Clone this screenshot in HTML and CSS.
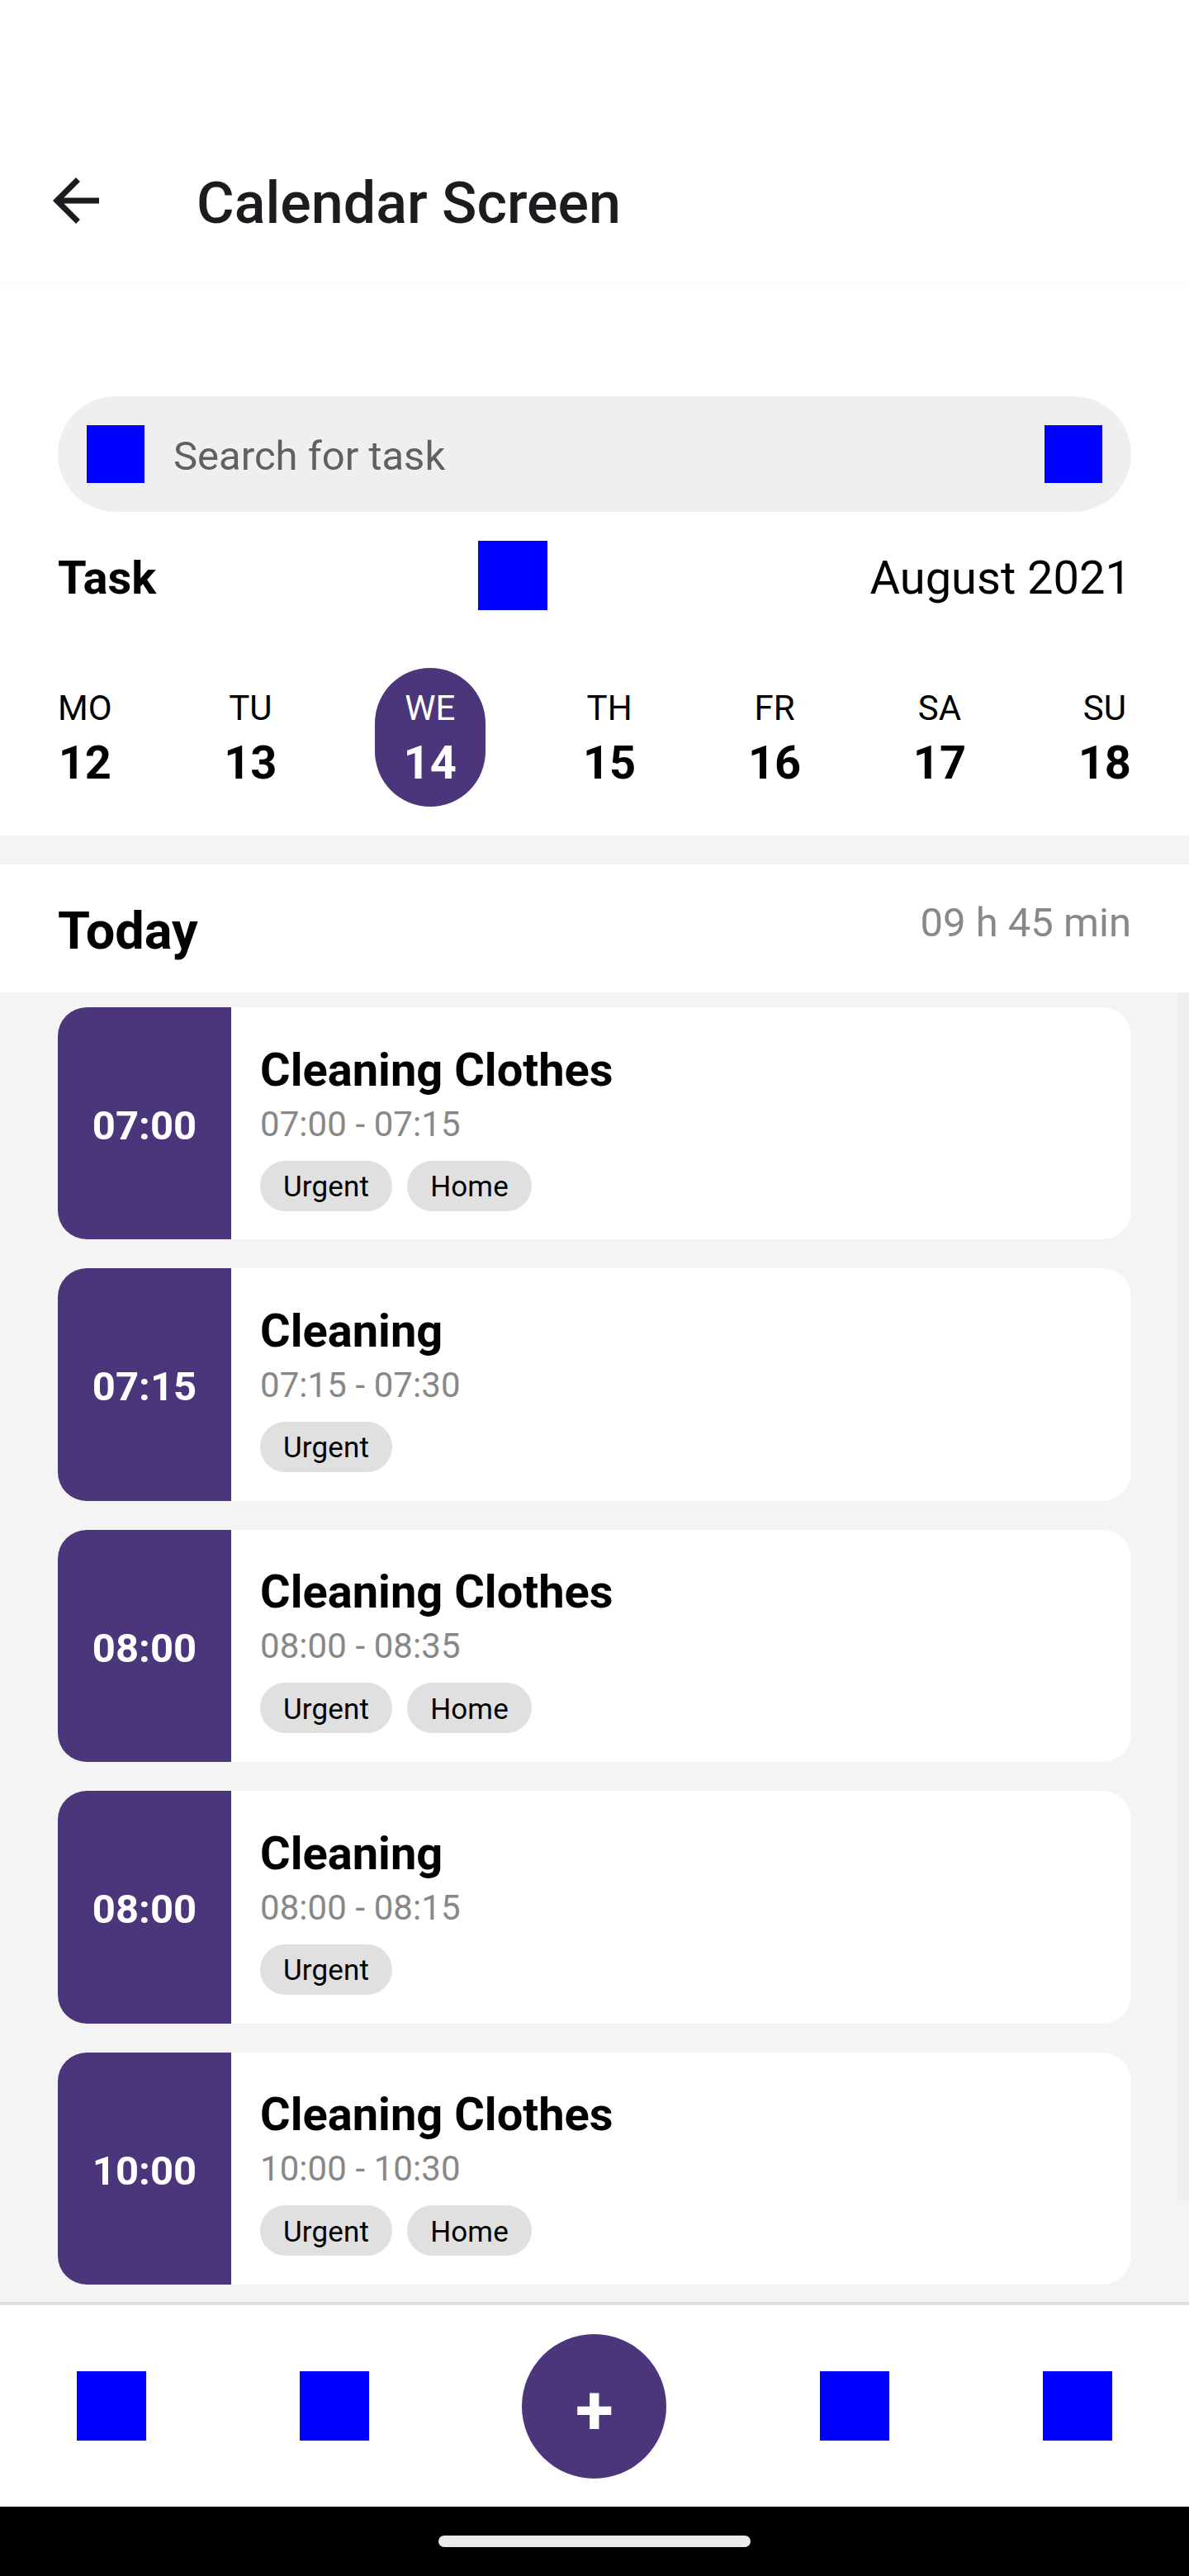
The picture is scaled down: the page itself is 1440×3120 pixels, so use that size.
FILE: index.html
```html
<!DOCTYPE html>
<html lang="en">
<head>
<meta charset="utf-8">
<title>Calendar Screen</title>
<link rel="stylesheet" href="styles.css">
</head>
<body>
<div class="screen">
  <header class="appbar">
    <svg class="back" viewBox="0 0 24 24" aria-label="Back"><path d="M20 11H7.83l5.59-5.59L12 4l-8 8 8 8 1.41-1.41L7.83 13H20v-2z"/></svg>
    <h1 class="title">Calendar Screen</h1>
  </header>

  <section class="top">
    <div class="search">
      <span class="icon small"></span>
      <span class="text placeholder">Search for task</span>
      <span class="icon small"></span>
    </div>
    <div class="month">
      <span class="text month-task">Task</span>
      <span class="icon"></span>
      <span class="text month-name">August 2021</span>
    </div>
    <div class="week">
      <div class="day"><span class="text name">MO</span><span class="text num">12</span></div>
      <div class="day"><span class="text name">TU</span><span class="text num">13</span></div>
      <div class="day active"><span class="text name">WE</span><span class="text num">14</span></div>
      <div class="day"><span class="text name">TH</span><span class="text num">15</span></div>
      <div class="day"><span class="text name">FR</span><span class="text num">16</span></div>
      <div class="day"><span class="text name">SA</span><span class="text num">17</span></div>
      <div class="day"><span class="text name">SU</span><span class="text num">18</span></div>
    </div>
  </section>

  <section class="today">
    <h2 class="text today-title">Today</h2>
    <span class="text today-total">09 h 45 min</span>
  </section>

  <main class="list">
    <article class="card">
      <div class="start"><span class="text">07:00</span></div>
      <div class="info">
        <h3 class="text card-title">Cleaning Clothes</h3>
        <span class="text range">07:00 - 07:15</span>
        <div class="tags"><span class="tag"><span class="text">Urgent</span></span><span class="tag"><span class="text">Home</span></span></div>
      </div>
    </article>
    <article class="card">
      <div class="start"><span class="text">07:15</span></div>
      <div class="info">
        <h3 class="text card-title">Cleaning</h3>
        <span class="text range">07:15 - 07:30</span>
        <div class="tags"><span class="tag"><span class="text">Urgent</span></span></div>
      </div>
    </article>
    <article class="card">
      <div class="start"><span class="text">08:00</span></div>
      <div class="info">
        <h3 class="text card-title">Cleaning Clothes</h3>
        <span class="text range">08:00 - 08:35</span>
        <div class="tags"><span class="tag"><span class="text">Urgent</span></span><span class="tag"><span class="text">Home</span></span></div>
      </div>
    </article>
    <article class="card">
      <div class="start"><span class="text">08:00</span></div>
      <div class="info">
        <h3 class="text card-title">Cleaning</h3>
        <span class="text range">08:00 - 08:15</span>
        <div class="tags"><span class="tag"><span class="text">Urgent</span></span></div>
      </div>
    </article>
    <article class="card">
      <div class="start"><span class="text">10:00</span></div>
      <div class="info">
        <h3 class="text card-title">Cleaning Clothes</h3>
        <span class="text range">10:00 - 10:30</span>
        <div class="tags"><span class="tag"><span class="text">Urgent</span></span><span class="tag"><span class="text">Home</span></span></div>
      </div>
    </article>
    <div class="scrollbar"></div>
  </main>

  <nav class="nav">
    <span class="icon"></span>
    <span class="icon"></span>
    <button class="add"><span class="text">+</span></button>
    <span class="icon"></span>
    <span class="icon"></span>
  </nav>
  <footer class="system"><div class="handle"></div></footer>
</div>
</body>
</html>
```

FILE: styles.css
```css
* { box-sizing: border-box; }
body {
  margin: 0;
  background: #fff;
  color: #000;
  font-family: Roboto, "Liberation Sans", sans-serif;
}
h1, h2, h3 { margin: 0; }

.screen {
  display: flex;
  flex-direction: column;
  width: 1440px;
  height: 3120px;
  overflow: hidden;
}

/* Text line: the extra top padding seats the baseline lower in its box */
.text {
  display: block;
  padding-top: calc(0.1em + 1px);
  margin-bottom: -1px;
  line-height: 1.227;
  white-space: nowrap;
}

.icon {
  flex: none;
  width: 84px;
  height: 84px;
  background: #00f;
}
.icon.small { width: 70px; height: 70px; }

/* App bar */
.appbar {
  display: flex;
  align-items: center;
  gap: 104px;
  flex: none;
  height: 340px;
  padding: 146px 50px 0;
  box-shadow: 0 4px 14px rgba(0, 0, 0, 0.025);
}
.back { width: 84px; height: 84px; fill: #1c1b1f; }
.title {
  padding-top: 5px;
  font-size: 70px;
  font-weight: 500;
  line-height: 82px;
  color: #1c1b1f;
}

/* Search, month and week */
.top {
  flex: none;
  height: 672px;
  padding: 140px 70px 0;
}
.search {
  display: flex;
  align-items: center;
  gap: 35px;
  height: 140px;
  padding: 0 35px;
  border-radius: 70px;
  background: #efefef;
}
.placeholder { flex: 1; font-size: 49px; color: #606060; }
.month {
  display: flex;
  align-items: center;
  justify-content: space-between;
  margin-top: 35px;
  font-size: 56px;
}
.month-task { font-weight: 700; }
.week {
  display: flex;
  justify-content: space-between;
  margin-top: 70px;
}
.day {
  display: flex;
  flex-direction: column;
  align-items: center;
  height: 168px;
  padding-top: 17.5px;
}
.day .name { height: 58px; font-size: 42px; }
.day .num { font-size: 56px; font-weight: 700; }
.day.active {
  margin: 0 -17.5px;
  padding: 17.5px 35px 0;
  border-radius: 70px;
  background: #4b367c;
  color: #fff;
}

/* Today summary */
.today {
  display: flex;
  align-items: flex-start;
  justify-content: space-between;
  flex: none;
  height: 190px;
  padding: 35px 70px 0;
  border-top: 35px solid #f4f4f4;
}
.today-title { font-size: 63px; font-weight: 700; }
.today-total { font-size: 49px; color: #888; }

/* Task list */
.list {
  position: relative;
  display: flex;
  flex-direction: column;
  gap: 35px;
  flex: none;
  height: 1586px;
  padding: 18px 70px 0;
  background: #f4f4f4;
}
.card {
  display: flex;
  flex: none;
  height: 281.4px;
  border-radius: 35px;
  overflow: hidden;
  background: #fff;
}
.start {
  display: flex;
  align-items: center;
  justify-content: center;
  width: 210px;
  background: #4b367c;
  color: #fff;
  font-size: 49px;
  font-weight: 700;
}
.info { padding: 35px; }
.card-title { height: 76.5px; font-size: 56px; font-weight: 700; }
.range { height: 58px; font-size: 42px; letter-spacing: 0.08px; color: #888; }
.tags { display: flex; gap: 18px; margin-top: 18px; }
.tag {
  height: 61px;
  padding: 7px 28px;
  border-radius: 31px;
  background: #e0e0e0;
  font-size: 35px;
  letter-spacing: 0.15px;
}
.scrollbar {
  position: absolute;
  top: 0;
  right: 0;
  width: 14px;
  height: 1463px;
  background: #efefef;
}

/* Bottom navigation */
.nav {
  display: flex;
  align-items: center;
  justify-content: space-around;
  flex: none;
  height: 248px;
  border-top: 4px solid #e0e0e0;
  background: #fff;
}
.add {
  display: flex;
  align-items: center;
  justify-content: center;
  width: 175px;
  height: 175px;
  padding: 0;
  border: 0;
  border-radius: 50%;
  background: #4b367c;
  color: #fff;
  font: 700 84px Roboto, sans-serif;
}
.system {
  display: flex;
  align-items: center;
  justify-content: center;
  flex: none;
  height: 84px;
  background: #000;
}
.handle { width: 378px; height: 14px; border-radius: 7px; background: #ebebeb; }
```
